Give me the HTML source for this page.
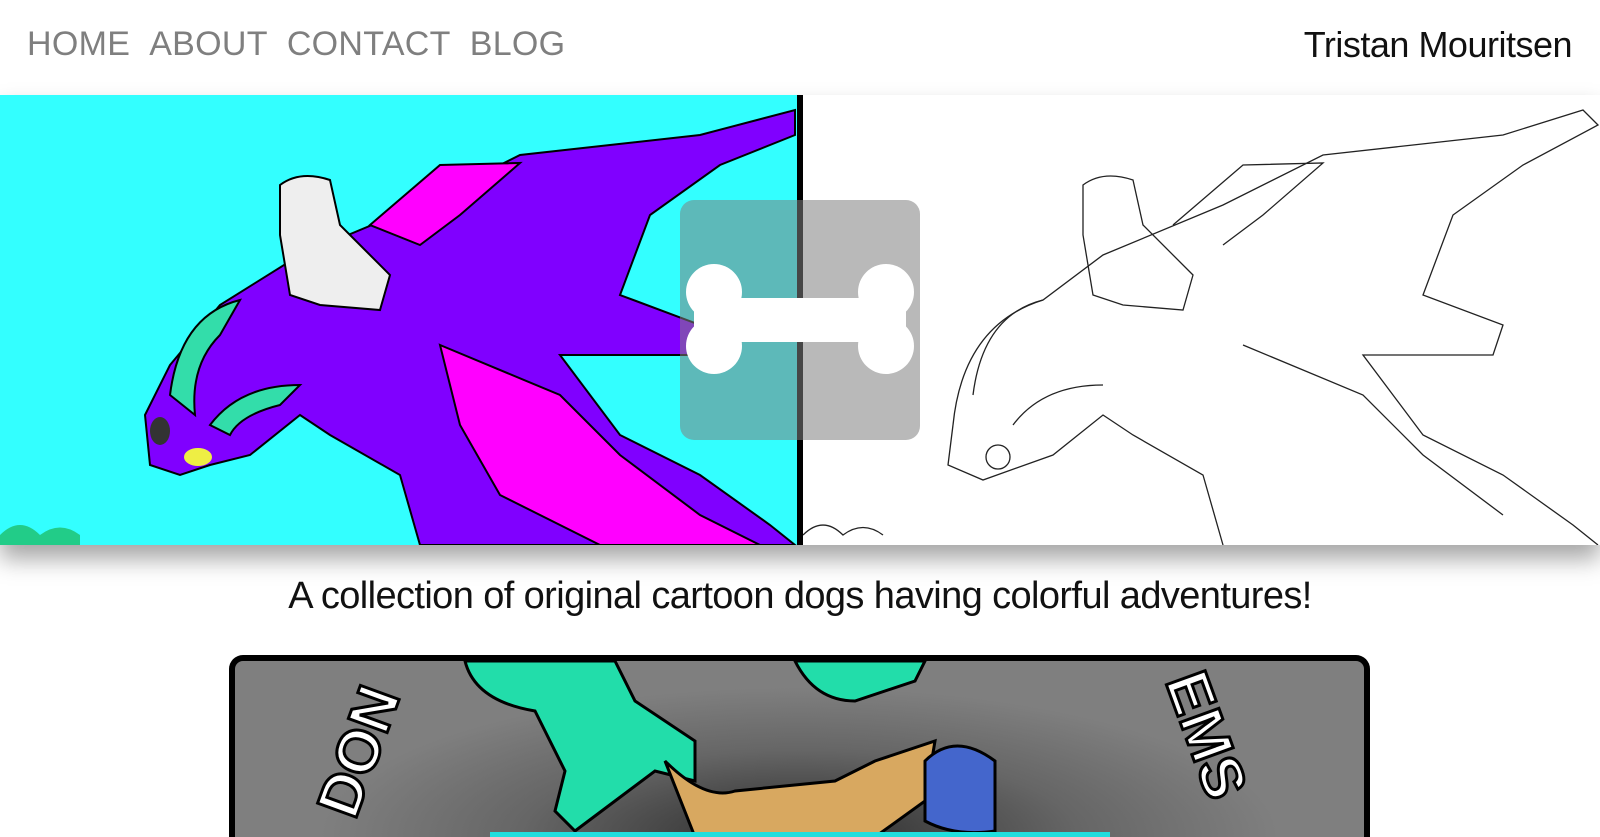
<!DOCTYPE html>
<html><head><meta charset="utf-8"><style>
html,body{margin:0;padding:0;width:1600px;height:837px;overflow:hidden;background:#fff;font-family:"Liberation Sans",sans-serif;}
.nav{position:absolute;top:25px;left:27px;font-size:34px;color:#7f7f7f;letter-spacing:0.3px}
.nav span{margin-right:19px}
.name{position:absolute;top:24px;right:28px;font-size:36px;color:#111;letter-spacing:-0.5px}
.hero{position:absolute;top:95px;left:0;width:1600px;height:450px;box-shadow:0 14px 22px rgba(0,0,0,0.35);overflow:hidden;background:#fff}
.left{position:absolute;left:0;top:0;width:797px;height:450px;background:#33ffff}
.div{position:absolute;left:797px;top:0;width:6px;height:450px;background:#000}
.btn{position:absolute;left:680px;top:105px;width:240px;height:240px;border-radius:14px;background:rgba(128,128,128,0.55)}
.cap{position:absolute;top:575px;width:1600px;text-align:center;font-size:38px;color:#111;letter-spacing:-0.6px}
.card{position:absolute;left:229px;top:655px;width:1129px;height:176px;border:6px solid #000;border-bottom:none;border-radius:14px 14px 0 0;background:radial-gradient(ellipse at 50% 100%,#2a2a2a 0%,#666 35%,#7f7f7f 60%);overflow:hidden}
.card svg{display:block}
</style></head><body>
<div class="nav"><span>HOME</span><span>ABOUT</span><span>CONTACT</span><span>BLOG</span></div>
<div class="name">Tristan Mouritsen</div>
<div class="hero">
<div class="left">
<svg width="797" height="450" viewBox="0 0 797 450">
<path d="M300 160 L420 110 L520 60 L610 50 L700 40 L795 15 L795 40 L720 70 L650 120 L620 200 L700 230 L690 260 L620 260 L560 260 L620 340 L700 380 L770 430 L795 450 L420 450 L400 380 L330 340 L300 320 L250 360 L210 370 L180 380 L150 370 L145 320 L170 270 L220 210 Z" fill="#8000ff" stroke="#000" stroke-width="2"/>
<path d="M440 250 L560 300 L620 360 L700 420 L760 450 L600 450 L500 400 L460 330 Z" fill="#ff00ff" stroke="#000" stroke-width="2"/>
<path d="M370 130 L440 70 L520 68 L460 120 L420 150 Z" fill="#ff00ff" stroke="#000" stroke-width="2"/>
<path d="M170 300 Q180 220 240 205 L220 240 Q190 270 195 320 Z" fill="#33ddaa" stroke="#000" stroke-width="2"/>
<path d="M210 330 Q240 290 300 290 L280 310 Q240 320 230 340 Z" fill="#33ddaa" stroke="#000" stroke-width="2"/>
<path d="M280 90 Q300 75 330 85 L340 130 L390 180 L380 215 L320 210 L290 200 L280 140 Z" fill="#eee" stroke="#000" stroke-width="2"/>
<ellipse cx="160" cy="336" rx="10" ry="14" fill="#333"/><ellipse cx="198" cy="362" rx="14" ry="9" fill="#ee4"/>
<path d="M0 440 Q20 420 40 440 Q60 425 80 440 L80 450 L0 450 Z" fill="#22cc88"/>
</svg></div>
<svg style="position:absolute;left:803px;top:0" width="797" height="450" viewBox="0 0 797 450" fill="none" stroke="#222" stroke-width="1.3">
<path d="M150 330 Q160 230 240 205 L300 160 L420 110 L520 60 L610 50 L700 40 L780 15 L795 30 L720 70 L650 120 L620 200 L700 230 L690 260 L620 260 L560 260 L620 340 L700 380 L770 430 L795 450"/>
<path d="M150 330 L145 370 L180 385 L250 360 L300 320 L330 340 L400 380 L420 450"/>
<path d="M370 130 L440 70 L520 68 L460 120 L420 150"/>
<path d="M280 90 Q300 75 330 85 L340 130 L390 180 L380 215 L320 210 L290 200 L280 140 Z"/>
<path d="M170 300 Q180 220 240 205 M210 330 Q240 290 300 290"/>
<path d="M440 250 L560 300 L620 360 L700 420"/>
<circle cx="195" cy="362" r="12"/>
<path d="M0 440 Q20 420 40 440 Q60 425 80 440"/>
</svg>
<div class="div"></div>
<div class="btn"><svg width="240" height="240" viewBox="0 0 240 240" fill="#fff">
<circle cx="34" cy="92" r="28"/><circle cx="34" cy="146" r="28"/><circle cx="206" cy="92" r="28"/><circle cx="206" cy="146" r="28"/>
<rect x="30" y="98" width="180" height="44"/><rect x="14" y="92" width="40" height="54"/><rect x="186" y="92" width="40" height="54"/>
</svg></div>
</div>
<div class="cap">A collection of original cartoon dogs having colorful adventures!</div>
<div class="card">
<svg width="1129" height="176" viewBox="0 0 1129 176">
<path d="M230 0 Q240 40 300 50 L310 70 L330 110 L320 150 L340 170 L380 140 L420 110 L460 120 L460 80 L400 40 L380 0 Z" fill="#22ddaa" stroke="#000" stroke-width="3"/>
<path d="M560 0 Q580 40 620 40 L680 20 L690 0 Z" fill="#22ddaa" stroke="#000" stroke-width="3"/>
<path d="M430 100 Q470 140 500 130 L600 120 L640 100 L700 80 L690 140 L640 176 L460 176 Z" fill="#d8a860" stroke="#000" stroke-width="3"/>
<path d="M690 100 Q720 70 760 100 L760 170 Q720 176 690 160 Z" fill="#4466cc" stroke="#000" stroke-width="3"/>
<text x="120" y="160" font-family="Liberation Sans" font-weight="bold" font-size="60" fill="#fff" stroke="#000" stroke-width="3" transform="rotate(-70 120 160)">DON</text>
<text x="930" y="20" font-family="Liberation Sans" font-weight="bold" font-size="60" fill="#fff" stroke="#000" stroke-width="3" transform="rotate(70 930 20)">EMS</text>
<rect x="255" y="171" width="620" height="5" fill="#22dddd"/>
</svg>
</div>
</body></html>
